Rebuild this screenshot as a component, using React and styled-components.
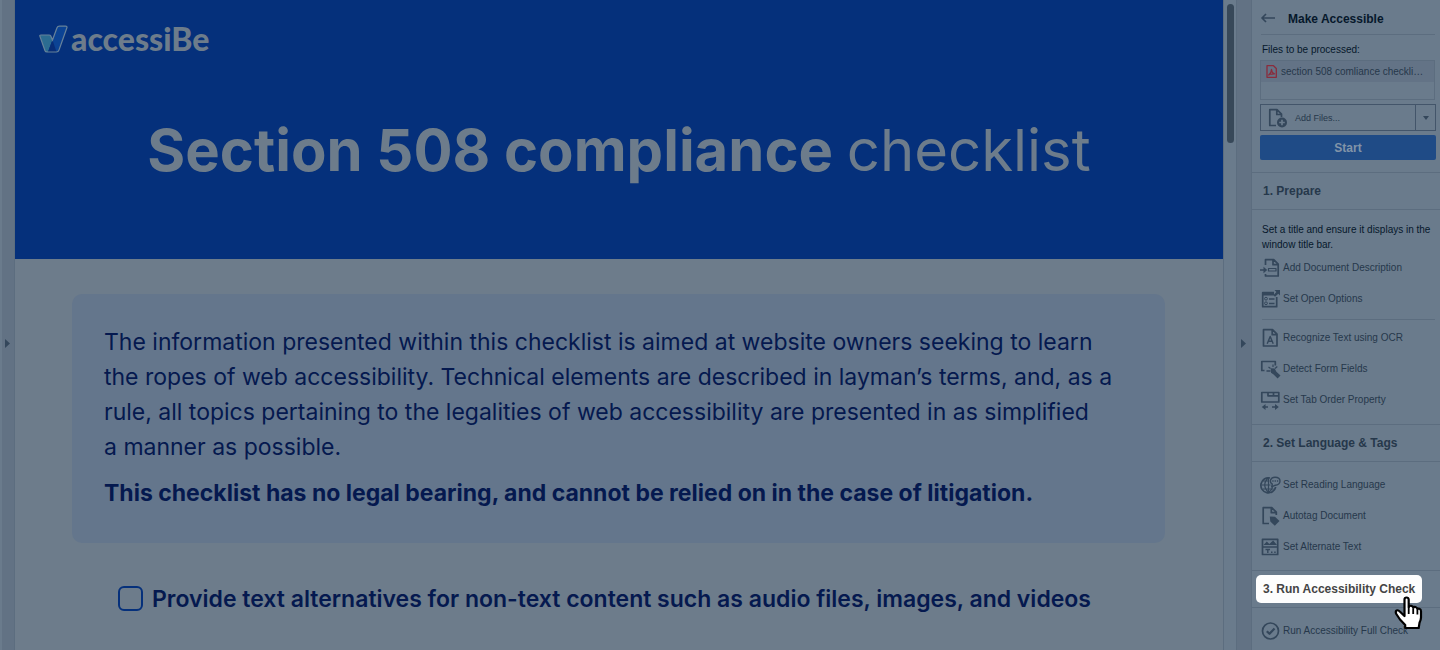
import React from "react";
import styled, { createGlobalStyle } from "styled-components";

const c = {
  paper: "#6d7c8b",
  panel: "#6a7b8c",
  rail: "#627284",
  line: "#5c6d7f",
  blue: "#05307b",
  navy: "#05194f",
  card: "#64768c",
  icon: "#34475b",
  ink: "#26384b",
  dark: "#06182b",
};

const Global = createGlobalStyle`
  * { box-sizing: border-box; }
  body { margin: 0; background: ${c.paper}; overflow: hidden; }
  h1, h2, h3, p, ul { margin: 0; padding: 0; }
  ul { list-style: none; }
  button { font: inherit; color: inherit; border: 0; background: none; padding: 0; margin: 0; text-align: left; }
`;

const Shell = styled.div`
  display: flex;
  height: 100vh;
  overflow: hidden;
  font-family: "Liberation Sans", Arial, sans-serif;
`;

const Rail = styled.div`
  flex: none;
  width: ${(p) => p.$width}px;
  display: flex;
  align-items: center;
  justify-content: center;
  padding: 36px 2px 0 0;
  background: ${c.rail};
  border-left: ${(p) => (p.$edge ? 2 : 1)}px solid ${(p) => (p.$edge ? c.panel : c.line)};
  border-right: 1px solid ${c.line};
`;

const Doc = styled.main`
  flex: 1;
  min-width: 0;
  background: ${c.paper};
  font-family: Inter, "Open Sans", sans-serif;
  color: ${c.navy};
`;

const Hero = styled.header`
  height: 259px;
  padding: 22px 24px;
  background: ${c.blue};
  color: ${c.paper};
`;

const Brand = styled.a`
  display: flex;
  align-items: center;
  gap: 3px;
  height: 34px;
  color: inherit;
  text-decoration: none;
  font: 900 32px/32px Lato, sans-serif;
`;

const Title = styled.h1`
  margin-top: 56px;
  text-align: center;
  font-size: 58px;
  line-height: 76px;
  font-weight: 700;
  white-space: nowrap;
  span { font-weight: 400; }
`;

const Card = styled.section`
  margin: 35px 58px 0 57px;
  padding: 31px 32px;
  height: 249px;
  border-radius: 10px;
  background: ${c.card};
  font-size: 23px;
  line-height: 35px;
  white-space: nowrap;
`;

const Notice = styled.p`
  margin-top: 11px;
  font-weight: 700;
`;

const CheckRow = styled.label`
  display: flex;
  align-items: center;
  gap: 9px;
  margin: 38px 0 0 103px;
  height: 35px;
  font-size: 23px;
  font-weight: 600;
  white-space: nowrap;
`;

const Box = styled.input`
  appearance: none;
  flex: none;
  width: 25px;
  height: 25px;
  margin: 0;
  border: 2px solid ${c.blue};
  border-radius: 6px;
`;

const Track = styled.div`
  flex: none;
  width: 13px;
  padding: 4px 2px 0 3px;
  background: ${c.panel};
  border-left: 1px solid ${c.line};
`;

const Thumb = styled.div`
  height: 139px;
  border-radius: 4px;
  background: #374859;
`;

const Panel = styled.aside`
  flex: none;
  width: 188px;
  background: ${c.panel};
  color: ${c.ink};
  font-size: 10px;
`;

const PanelTop = styled.div`
  display: flex;
  align-items: center;
  gap: 13px;
  height: 35px;
  margin: 0 5px 0 9px;
  padding-top: 3px;
  border-bottom: 1px solid ${c.line};
  button { display: flex; }
  h2 { font-size: 12px; color: ${c.dark}; }
`;

const Files = styled.div`
  padding: 7px 4px 12px 8px;
`;

const Caption = styled.p`
  padding-left: 2px;
  line-height: 15px;
  color: ${c.dark};
`;

const FileList = styled.ul`
  height: 40px;
  margin: 3px 1px 0 0;
  border: 1px solid ${c.line};
`;

const FileRow = styled.li`
  display: flex;
  align-items: center;
  gap: 4px;
  height: 21px;
  padding-left: 5px;
  background: #637386;
  white-space: nowrap;
`;

const AddFiles = styled.div`
  display: flex;
  height: 27px;
  margin-top: 4px;
  border: 1px solid #43556a;
  font-size: 9px;
`;

const AddButton = styled.button`
  flex: 1;
  display: flex;
  align-items: center;
  gap: 8px;
  padding-left: 7px;
`;

const MoreButton = styled.button`
  display: flex;
  align-items: center;
  justify-content: center;
  width: 20px;
  border-left: 1px solid #43556a;
`;

const Start = styled.button`
  display: block;
  width: 100%;
  height: 25px;
  margin-top: 4px;
  border-radius: 2px;
  background: #1f4b86;
  color: #8294a8;
  font-size: 12px;
  font-weight: 700;
  text-align: center;
`;

const Heading = styled.h3`
  display: flex;
  align-items: center;
  height: 38px;
  padding-left: 4px;
  border-top: 1px solid ${c.line};
  border-bottom: 1px solid ${c.line};
  font-size: 12px;
  button { padding-left: 7px; }
`;

const Spot = styled.button`
  && {
    position: relative;
    width: 166px;
    height: 28px;
    border-radius: 5px;
    background: #fdfdfd;
    color: #444;
    font-weight: 700;
    white-space: nowrap;
  }
`;

const Hand = styled.svg`
  position: absolute;
  left: 138px;
  top: 21px;
`;

const Group = styled.div`
  padding: ${(p) => p.$top}px 5px ${(p) => p.$bottom}px 8px;
`;

const Note = styled.p`
  padding-left: 2px;
  line-height: 15px;
  white-space: nowrap;
  color: ${c.dark};
`;

const Divider = styled.hr`
  margin: 5px 0 2px 2px;
  border: 0;
  border-top: 1px solid ${c.line};
`;

const Tool = styled.button`
  && {
    display: flex;
    align-items: center;
    gap: 3px;
    width: 100%;
    height: 31px;
    white-space: nowrap;
  }
`;

const Icon = styled.svg`
  flex: none;
  fill: none;
  stroke: ${c.icon};
  stroke-width: 1.7;
  stroke-linejoin: round;
  overflow: visible;
`;

const icons = {
  describe: (
    <>
      <path d="M5.500 7V1.700h8.200l4.500 4.500V18H5.500v-2M13 1.800v4.900h5M0 12h5" />
      <path d="M3.500 8.700 7.200 12l-3.700 3.300z" fill={c.icon} stroke="none" />
      <rect x="8.500" y="10.500" width="7.500" height="2.500" strokeWidth="1.200" />
    </>
  ),
  options: (
    <>
      <path d="M14 3.700H2.700v14h14V8" />
      <path d="M2 3h12v3.500H2zM14.500 1H20v5.500l-1.700-1.700-3.300 3-1.600-1.600 3-3.200z" fill={c.icon} stroke="none" />
      <circle cx="6" cy="9.700" r="1.400" strokeWidth="1" />
      <circle cx="6" cy="14.300" r="1.400" strokeWidth="1" />
      <path d="M9 10h5.500M9 14.500h5.500" strokeWidth="1.600" />
    </>
  ),
  ocr: (
    <>
      <path d="M3.500 1.700h9l4.500 4.500V18H3.500zM12.200 1.800v4.900h4.600" />
      <path d="m7.200 15.800 3-7.300 3 7.300M8.300 13.300h3.900" strokeWidth="1.400" />
    </>
  ),
  detect: (
    <>
      <path d="M4.500 11.500H1.800v-9h13.500v4M6.500 12h4" />
      <path d="m15 9.500 2.300-2M13 8V5.500M10.500 9.500 8.500 8" strokeWidth="1.200" />
      <path d="m10.700 9.200 4 .3 1.700 3.300 4.100 3.600-2.900 3-4-4-2.600-1.700z" fill={c.icon} stroke="none" />
    </>
  ),
  tab: (
    <>
      <path d="M1.800 2.500h17V12h-17zM8 2.500v3.300h10.500M13.500 2.500v3.300M4 17h4M12 17h4" />
      <path d="M1.800 17 5.500 14v6zM18.800 17 15 14v6z" fill={c.icon} stroke="none" />
    </>
  ),
  language: (
    <>
      <path d="M10 3a7.500 7.500 0 1 0 5.700 9" />
      <path d="M8.500 2.800c-5 4.400-5 10 0 14.500 2.300-1.500 3.600-3.300 3.900-5.300M8.500 3v14M1.500 10h9M3 6h5.500M3 14h10.500" strokeWidth="1.200" />
      <path d="M15 2.200c3 0 5 1.600 5 3.900s-2 4.100-4.700 4.100l-3.600 1.600.6-2.600c-3.500-2.300-1.800-7 2.700-7z" strokeWidth="1.400" />
      <path d="M12.300 6h6" strokeWidth="1.300" strokeDasharray="1.300 1" />
    </>
  ),
  autotag: (
    <>
      <path d="M9 17.500H3.200V1.700h8.600l4.500 4.500V9M11.300 1.800v4.900h4.700" />
      <path d="m9.800 10.500 5.200.3 4.500 4.200-4.700 4.700-4.500-4.200z" fill={c.icon} stroke="none" />
    </>
  ),
  alt: (
    <>
      <path d="M2.500 2.300h15.200v15.200H2.500zM2.500 10h15" />
      <path d="m3.500 8 3.300-3.500L9.300 7l3.900-3.500 3.800 4.500z" fill={c.icon} stroke="none" />
      <path d="M5.500 12.500h4.500M7.800 12v4M11 15.300h1.500M14.200 15.300h1.500" strokeWidth="1.400" />
    </>
  ),
  check: (
    <>
      <circle cx="10.500" cy="10" r="8" />
      <path d="m6.800 10.200 2.700 2.600 5-5.300" strokeWidth="2.200" />
    </>
  ),
};

const ToolItem = ({ icon, children }) => (
  <Tool type="button">
    <Icon width="20" height="20" viewBox="0 0 20 20" aria-hidden="true">{icons[icon]}</Icon>
    {children}
  </Tool>
);

const Arrow = () => (
  <svg width="5" height="9" viewBox="0 0 5 9" aria-hidden="true">
    <path d="M0 0l5 4.500L0 9z" fill={c.icon} />
  </svg>
);

export default function App() {
  return (
    <>
      <Global />
      <Shell>
        <Rail $width={15} $edge><Arrow /></Rail>
        <Doc>
          <Hero>
            <Brand href="#">
              <svg width="29" height="28" viewBox="0 0 29 28" aria-hidden="true">
                <path d="M1 11.500Q.3 10 2 10h8q1.300 0 1.800 1l1.700 4-4.500 12H7.500q-1 0-1.500-1.200z" fill="#2c6c91" />
                <path d="M13.500 15 18 2.800Q18.600 1.200 20.500 1.200h6q2 0 1.300 1.800L20 25q-.7 2-2.500 2H9z" fill="#0b4394" />
                <path d="m13.500 15 4 12H9z" fill="#072d77" />
                <path d="M1 11.500Q.3 10 2 10h8q1.300 0 1.800 1l1.700 4L18 2.800q.6-1.600 2.500-1.600h6q2 0 1.300 1.800L20 25q-.7 2-2.500 2H8q-1.500 0-2-1.200z" fill="none" stroke="#67829a" strokeWidth="1.200" />
              </svg>
              accessiBe
            </Brand>
            <Title>Section 508 compliance <span>checklist</span></Title>
          </Hero>
          <Card>
            <p>
              The information presented within this checklist is aimed at website owners seeking to learn<br />
              the ropes of web accessibility. Technical elements are described in layman’s terms, and, as a<br />
              rule, all topics pertaining to the legalities of web accessibility are presented in as simplified<br />
              a manner as possible.
            </p>
            <Notice>This checklist has no legal bearing, and cannot be relied on in the case of litigation.</Notice>
          </Card>
          <CheckRow>
            <Box type="checkbox" />
            Provide text alternatives for non-text content such as audio files, images, and videos
          </CheckRow>
        </Doc>
        <Track><Thumb /></Track>
        <Rail $width={16}><Arrow /></Rail>
        <Panel>
          <PanelTop>
            <button type="button" aria-label="Back">
              <Icon width="14" height="10" viewBox="0 0 14 10"><path d="M14 4H1M5 0 1 4l4 4" /></Icon>
            </button>
            <h2>Make Accessible</h2>
          </PanelTop>
          <Files>
            <Caption>Files to be processed:</Caption>
            <FileList>
              <FileRow>
                <Icon width="11" height="13" viewBox="0 0 11 13" aria-hidden="true">
                  <path d="M1 .7h6.500L10.300 3.500v8.800H1z" stroke="#8a2c3c" strokeWidth="1.300" />
                  <path d="M2.700 10c1.500-1 2.800-3.200 2.800-5.500 0 2 1.200 3.700 3 4.300-2 0-4 .2-5.800 1.200z" stroke="#8a2c3c" strokeWidth="1.300" />
                </Icon>
                section 508 comliance checkli…
              </FileRow>
            </FileList>
            <AddFiles>
              <AddButton type="button">
                <Icon width="19" height="20" viewBox="0 0 19 20" aria-hidden="true">
                  <path d="M8 17.500H1.800V1.700H9l4.500 4.500V9M8.800 2v4.500h4.500" />
                  <circle cx="14" cy="14.500" r="5" fill={c.icon} stroke="none" />
                  <path d="M11.200 14.500h5.600M14 11.700v5.600" stroke={c.panel} />
                </Icon>
                Add Files...
              </AddButton>
              <MoreButton type="button" aria-label="More file sources">
                <svg width="6" height="4" viewBox="0 0 6 4"><path d="M0 0h6L3 4z" fill={c.icon} /></svg>
              </MoreButton>
            </AddFiles>
            <Start type="button">Start</Start>
          </Files>
          <Heading><button type="button">1. Prepare</button></Heading>
          <Group $top={12} $bottom={9}>
            <Note>Set a title and ensure it displays in the<br />window title bar.</Note>
            <ToolItem icon="describe">Add Document Description</ToolItem>
            <ToolItem icon="options">Set Open Options</ToolItem>
            <Divider />
            <ToolItem icon="ocr">Recognize Text using OCR</ToolItem>
            <ToolItem icon="detect">Detect Form Fields</ToolItem>
            <ToolItem icon="tab">Set Tab Order Property</ToolItem>
          </Group>
          <Heading><button type="button">2. Set Language &amp; Tags</button></Heading>
          <Group $top={7} $bottom={8}>
            <ToolItem icon="language">Set Reading Language</ToolItem>
            <ToolItem icon="autotag">Autotag Document</ToolItem>
            <ToolItem icon="alt">Set Alternate Text</ToolItem>
          </Group>
          <Heading>
            <Spot type="button">
              3. Run Accessibility Check
              <Hand width="30" height="34" viewBox="0 0 30 34" aria-hidden="true">
                <path
                  d="M10.500 3.500q0-2 2-2t2.200 2V11q.6-1.500 2.600-1.200 1.800.3 1.900 2 .8-1.200 2.300-.8 1.800.5 1.900 2.200.7-.9 2-.5 1.600.5 1.600 2.500v6.300q0 2-1.500 5.300l-.8 5.200H11.200v-3L6 23.500 2.300 18q-1.200-2.500.3-3.500 1.500-.8 3.200 1l4.700 4.500z"
                  fill="#fff" stroke="#000" strokeWidth="2.200" strokeLinejoin="round"
                />
                <path d="M14.700 11v7M19.200 12.500V18M23.400 14v4.500" stroke="#000" strokeWidth="1.800" />
              </Hand>
            </Spot>
          </Heading>
          <Group $top={7} $bottom={0}>
            <ToolItem icon="check">Run Accessibility Full Check</ToolItem>
          </Group>
        </Panel>
      </Shell>
    </>
  );
}
